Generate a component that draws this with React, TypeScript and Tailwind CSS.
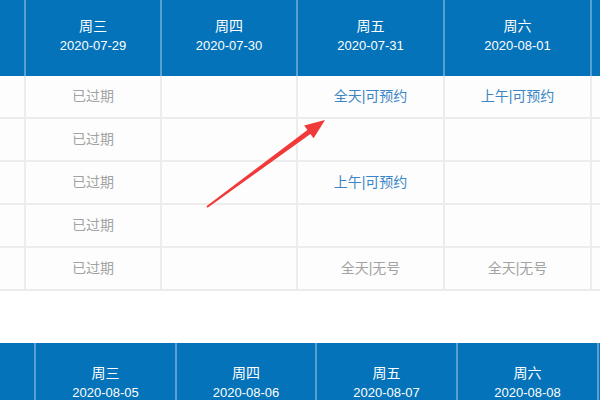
import React from "react";

const font = { fontFamily: '"Liberation Sans", "Noto Sans CJK SC", sans-serif' };

type Cell = { t: string; c: "g" | "b" } | null;

const topCols = ["w-[26px]", "w-[136px]", "w-[136px]", "w-[147px]", "w-[147px]", "flex-1"];
const botCols = ["w-[36px]", "w-[141px]", "w-[140px]", "w-[141px]", "w-[141px]", "flex-1"];

const topHead = [null, ["周三", "2020-07-29"], ["周四", "2020-07-30"], ["周五", "2020-07-31"], ["周六", "2020-08-01"], null];
const botHead = [null, ["周三", "2020-08-05"], ["周四", "2020-08-06"], ["周五", "2020-08-07"], ["周六", "2020-08-08"], null];

const g = (t: string): Cell => ({ t, c: "g" });
const b = (t: string): Cell => ({ t, c: "b" });

const rows: Cell[][] = [
  [null, g("已过期"), null, b("全天|可预约"), b("上午|可预约"), null],
  [null, g("已过期"), null, null, null, null],
  [null, g("已过期"), null, b("上午|可预约"), null, null],
  [null, g("已过期"), null, null, null, null],
  [null, g("已过期"), null, g("全天|无号"), g("全天|无号"), null],
];

function Header({ cols, head }: { cols: string[]; head: (string[] | null)[] }) {
  return (
    <div className="flex h-[80px] bg-[#0473b9]">
      {cols.map((w, i) => (
        <div
          key={i}
          className={`${w} shrink-0 flex flex-col items-center justify-center text-white ${i < cols.length - 1 ? "border-r-2 border-[#5a9fd2]" : ""}`}
        >
          {head[i] && (
            <>
              <div className="text-[14px] leading-[20px]">{head[i]![0]}</div>
              <div className="text-[13px] leading-[20px]">{head[i]![1]}</div>
            </>
          )}
        </div>
      ))}
    </div>
  );
}

export default function App() {
  return (
    <div className="relative w-[600px] h-[400px] overflow-hidden bg-white" style={font}>
      <div className="-mt-1">
        <Header cols={topCols} head={topHead} />
        <div className="bg-[#fdfdfd]">
          {rows.map((r, ri) => (
            <div key={ri} className="flex h-[43px] border-b-2 border-[#ececec]">
              {topCols.map((w, i) => (
                <div
                  key={i}
                  className={`${w} shrink-0 flex items-center justify-center text-[14px] ${i < topCols.length - 1 ? "border-r-2 border-[#ececec]" : ""} ${r[i]?.c === "b" ? "text-[#3a86c6]" : "text-[#a3a3a3]"}`}
                >
                  {r[i]?.t}
                </div>
              ))}
            </div>
          ))}
        </div>
      </div>
      <div className="mt-[52px]">
        <Header cols={botCols} head={botHead} />
      </div>
      <svg className="absolute left-0 top-0" width="600" height="400">
        <polygon
          points="206.4,206.2 307.4,129.9 304.2,125.5 325,120 313.6,138.3 310.4,133.9 207.6,207.8"
          fill="#f03a3a"
        />
      </svg>
    </div>
  );
}
